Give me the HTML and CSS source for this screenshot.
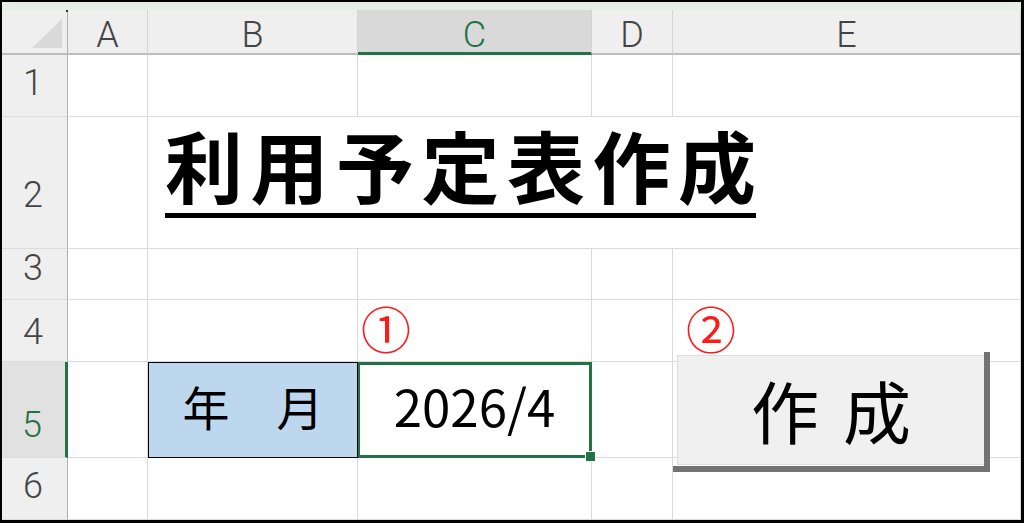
FILE: index.html
```html
<!DOCTYPE html>
<html lang="ja">
<head>
<meta charset="utf-8">
<title>利用予定表作成</title>
<link rel="stylesheet" href="styles.css">
</head>
<body>
<div class="sheet">
  <div class="topbar"></div>
  <div class="grid">
    <div class="hd corner"><span class="tri"></span></div>
    <div class="hd col">A</div>
    <div class="hd col">B</div>
    <div class="hd col sel">C</div>
    <div class="hd col">D</div>
    <div class="hd col">E</div>

    <div class="rh r1">1</div>
    <div class="c"></div><div class="c"></div><div class="c"></div><div class="c"></div><div class="c"></div>

    <div class="rh r2">2</div>
    <div class="c"></div>
    <div class="c title-cell"><span class="title">利用予定表作<span class="last">成</span></span></div>

    <div class="rh r3">3</div>
    <div class="c"></div><div class="c"></div><div class="c"></div><div class="c"></div><div class="c"></div>

    <div class="rh r4">4</div>
    <div class="c"></div><div class="c"></div>
    <div class="c mark mark1">①</div>
    <div class="c"></div>
    <div class="c mark mark2">②</div>

    <div class="rh r5 selrow">5</div>
    <div class="c"></div>
    <div class="c label">年　月</div>
    <div class="c active">2026/4<span class="handle"></span></div>
    <div class="c"></div>
    <div class="c"></div>

    <div class="rh r6">6</div>
    <div class="c"></div><div class="c"></div><div class="c"></div><div class="c"></div><div class="c"></div>

    <div class="btn">作<span class="gap"></span>成</div>
  </div>
</div>
</body>
</html>
```
FILE: styles.css
```css
html, body {
  margin: 0;
  padding: 0;
  background: #ffffff;
}

.sheet {
  width: 1024px;
  height: 523px;
  box-sizing: border-box;
  border-style: solid;
  border-color: #000;
  border-width: 2px 3px 3px 2px;
  overflow: hidden;
  font-family: "Noto Sans CJK JP", sans-serif;
}

.topbar {
  height: 8px;
  background: #e4ede7;
}

.grid {
  position: relative;
  display: grid;
  grid-template-columns: 66px 80px 210px 234px 81px 348px;
  grid-template-rows: 45px 62px 132px 51px 62px 96px 62px;
}

.hd {
  background: #efefef;
  box-sizing: border-box;
  border-right: 1px solid #d4d4d4;
  border-bottom: 2px solid #bdbdbd;
}

.corner {
  position: relative;
  border-right: 1px solid #b0b0b0;
}

.corner::after {
  content: "";
  position: absolute;
  right: -1px;
  top: 0;
  width: 2px;
  height: 2px;
  background: #333;
}

.tri {
  position: absolute;
  right: 5px;
  bottom: 5px;
  width: 30px;
  height: 29px;
  background: #d9d9d9;
  clip-path: polygon(100% 0, 100% 100%, 0 100%);
}

.col {
  display: flex;
  justify-content: center;
  align-items: flex-start;
  padding-top: 7px;
  font-family: "Roboto", "Liberation Sans", sans-serif;
  font-weight: 300;
  font-size: 36px;
  line-height: 36px;
  color: #444;
}

.col.sel {
  background: #d9d9d9;
  color: #217346;
  border-bottom: 3px solid #217346;
}

.rh {
  background: #efefef;
  box-sizing: border-box;
  border-right: 1px solid #b0b0b0;
  border-bottom: 1px solid #dcdcdc;
  display: flex;
  justify-content: center;
  align-items: flex-start;
  padding-right: 3px;
  font-family: "Roboto", "Liberation Sans", sans-serif;
  font-weight: 300;
  font-size: 36px;
  line-height: 36px;
  color: #444;
}

.r1 { padding-top: 10px; }
.r2 { padding-top: 60px; }
.r3 { padding-top: 1px; }
.r4 { padding-top: 14px; }
.r5 { padding-top: 45px; }
.r6 { padding-top: 10px; }

.rh.selrow {
  background: #e1e1e1;
  color: #217346;
  border-right: 3px solid #217346;
}

.c {
  box-sizing: border-box;
  border-right: 1px solid #dadada;
  border-bottom: 1px solid #dadada;
}

.title-cell {
  grid-column: span 4;
  padding: 7px 0 0 17px;
  white-space: nowrap;
}

.title {
  display: inline-block;
  font-weight: 700;
  font-size: 78px;
  line-height: 80px;
  letter-spacing: 7.5px;
  padding-bottom: 9px;
  border-bottom: 5px solid #000;
  color: #000;
}

.title .last {
  letter-spacing: 0;
}

.mark {
  display: flex;
  align-items: center;
  padding-bottom: 8px;
  color: #ff1a1a;
  font-size: 50px;
  line-height: 1;
}

.mark1 { padding-left: 3px; }
.mark2 { padding-left: 13px; }

.label {
  background: #bdd7ee;
  border: 1px solid #000;
  display: flex;
  justify-content: center;
  align-items: center;
  padding-bottom: 10px;
  font-size: 47px;
  line-height: 1;
  color: #000;
}

.active {
  position: relative;
  border: 3px solid #217346;
  border-left-width: 2px;
  display: flex;
  justify-content: center;
  align-items: center;
  padding-bottom: 9px;
  font-size: 51px;
  line-height: 1;
  color: #000;
}

.handle {
  position: absolute;
  right: -7px;
  bottom: -7px;
  width: 9px;
  height: 9px;
  background: #217346;
  border: 1px solid #fff;
}

.btn {
  position: absolute;
  left: 675px;
  top: 345px;
  width: 308px;
  height: 110px;
  box-sizing: border-box;
  background: #f0f0f0;
  border: 1px solid #dedede;
  display: flex;
  justify-content: center;
  align-items: center;
  font-size: 68px;
  line-height: 1;
  color: #000;
}

.btn .gap {
  display: inline-block;
  width: 24px;
}

.btn::before {
  content: "";
  position: absolute;
  left: -5px;
  right: -6px;
  bottom: -8px;
  height: 6px;
  background: #737373;
}

.btn::after {
  content: "";
  position: absolute;
  right: -6px;
  top: -4px;
  bottom: -8px;
  width: 6px;
  background: #737373;
}
```
